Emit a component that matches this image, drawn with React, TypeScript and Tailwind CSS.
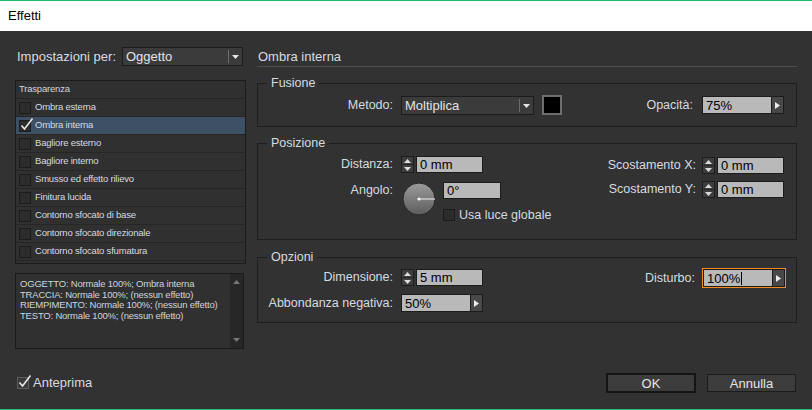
import React from "react";

const font = "font-['Liberation_Sans',Arial,sans-serif]";
const label = "whitespace-nowrap text-[12.5px] leading-[15px] text-[#d6dbe0]";

const effects = [
  "Ombra esterna",
  "Ombra interna",
  "Bagliore esterno",
  "Bagliore interno",
  "Smusso ed effetto rilievo",
  "Finitura lucida",
  "Contorno sfocato di base",
  "Contorno sfocato direzionale",
  "Contorno sfocato sfumatura",
];

const summary = [
  "OGGETTO: Normale 100%; Ombra interna",
  "TRACCIA: Normale 100%; (nessun effetto)",
  "RIEMPIMENTO: Normale 100%; (nessun effetto)",
  "TESTO: Normale 100%; (nessun effetto)",
];

function CheckBox({ checked = false, light = false }: { checked?: boolean; light?: boolean }) {
  const box = light ? "border-[#5e5e5e] bg-[#3a3a3a]" : "border-[#1b1b1b] bg-[#2c2c2c]";
  return (
    <span className={`relative block h-[12px] w-[12px] shrink-0 border ${box}`}>
      {checked && (
        <svg className="absolute -left-[1px] -top-[4px] h-[16px] w-[16px]" viewBox="0 0 16 16" fill="none">
          <path d="M2.5 8.5 L5.5 12 L13.5 1.5" stroke="#ececec" strokeWidth="1.5" />
        </svg>
      )}
    </span>
  );
}

function Dropdown({ value, width }: { value: string; width: string }) {
  return (
    <div className={`flex h-[19px] items-center border border-[#1c1c1c] bg-[#3b3b3b] ${width}`}>
      <span className="flex-1 pl-[3px] text-[13px] leading-none text-[#e0e4e8]">{value}</span>
      <span className="h-[13px] w-px bg-[#6c6c6c]" />
      <svg width="13" height="17" viewBox="0 0 13 17">
        <path d="M3 7 H10 L6.5 11 Z" fill="#e6e6e6" />
      </svg>
    </div>
  );
}

function Field({ value, width, caret = false }: { value: string; width: string; caret?: boolean }) {
  return (
    <div className={`flex h-[17px] items-center border border-[#1c1c1c] bg-[#b9b9b9] pl-[3px] ${width}`}>
      <span className="text-[13px] leading-none text-black">{value}</span>
      {caret && <span className="ml-px h-[13px] w-px bg-black" />}
    </div>
  );
}

function ArrowField({ value, width, caret = false }: { value: string; width: string; caret?: boolean }) {
  return (
    <div className="flex h-[18px]">
      <div className={`flex items-center border border-[#1c1c1c] bg-[#b9b9b9] pl-[3px] ${width}`}>
        <span className="text-[13px] leading-none text-black">{value}</span>
        {caret && <span className="ml-px h-[13px] w-px bg-black" />}
      </div>
      <div className="flex w-[12px] items-center justify-center border border-l-0 border-[#1c1c1c] bg-[#484848]">
        <svg width="5" height="7" viewBox="0 0 5 7">
          <path d="M0 0 L5 3.5 L0 7 Z" fill="#ececec" />
        </svg>
      </div>
    </div>
  );
}

function Spinner() {
  return (
    <div className="flex h-[17px] w-[13px] flex-col border border-[#1c1c1c] bg-[#3e3e3e]">
      <div className="flex flex-1 items-center justify-center border-b border-[#252525]">
        <svg width="7" height="4" viewBox="0 0 7 4">
          <path d="M0 4 H7 L3.5 0 Z" fill="#dcdcdc" />
        </svg>
      </div>
      <div className="flex flex-1 items-center justify-center">
        <svg width="7" height="4" viewBox="0 0 7 4">
          <path d="M0 0 H7 L3.5 4 Z" fill="#dcdcdc" />
        </svg>
      </div>
    </div>
  );
}

function SpinField({ value }: { value: string }) {
  return (
    <div className="flex gap-[2px]">
      <Spinner />
      <Field value={value} width="w-[67px]" />
    </div>
  );
}

function Dial() {
  return (
    <svg width="34" height="34" viewBox="0 0 34 34" className="ml-[9px] shrink-0">
      <defs>
        <linearGradient id="dialFill" x1="0" y1="0" x2="0" y2="1">
          <stop offset="0%" stopColor="#9c9c9c" />
          <stop offset="100%" stopColor="#5c5c5c" />
        </linearGradient>
      </defs>
      <circle cx="17" cy="17" r="16" fill="url(#dialFill)" stroke="#262626" strokeWidth="1" />
      <line x1="17" y1="17" x2="33" y2="17" stroke="#f4f4f4" strokeWidth="1" />
      <circle cx="17" cy="17" r="1.6" fill="#f4f4f4" />
    </svg>
  );
}

function Group({ title, className, children }: { title: string; className: string; children: React.ReactNode }) {
  return (
    <fieldset className={`border border-[#1e1e1e] ${className}`}>
      <legend className={`ml-[9px] h-[16px] px-[4px] !leading-[16px] ${label}`}>{title}</legend>
      {children}
    </fieldset>
  );
}

export default function App() {
  return (
    <div className={`flex h-[410px] w-[812px] flex-col overflow-hidden bg-[#323232] ${font}`}>
      <div className="h-px bg-[#1cc06e]" />
      <div className="flex h-[30px] items-center bg-white pl-[8px] text-[13px] text-black">Effetti</div>

      <div className="flex h-[378px] flex-col">
        <div className="flex gap-[11px] pl-[15px] pt-[16px]">
          {/* left column */}
          <div className="flex w-[231px] flex-col">
            <div className="flex h-[19px] items-center pl-[2px] pr-[3px]">
              <span className="text-[13px] text-[#d6dbe0]">Impostazioni per:</span>
              <div className="ml-auto">
                <Dropdown value="Oggetto" width="w-[121px]" />
              </div>
            </div>

            <div className="mt-[14px] h-[184px] border border-[#1b1b1b] bg-[#303030]">
              <div className="flex h-[18px] items-center border-b border-[#262626] pl-[3px] text-[9.5px] tracking-[-0.2px] text-[#d0d6dc]">
                Trasparenza
              </div>
              {effects.map((name, i) => (
                <div
                  key={name}
                  className={`flex h-[18px] items-center gap-[4px] border-b border-[#262626] pl-[3px] ${
                    i === 1 ? "bg-[#3e5065]" : ""
                  }`}
                >
                  <CheckBox checked={i === 1} />
                  <span className="text-[9.5px] tracking-[-0.2px] text-[#d4dae0]">{name}</span>
                </div>
              ))}
            </div>

            <div className="mt-[9px] flex h-[76px] w-[229px] border border-[#1b1b1b] bg-[#303030]">
              <div className="flex-1 pl-[4px] pt-[5px] text-[9.5px] leading-[10.6px] tracking-[-0.2px] text-[#ccd4dc]">
                {summary.map((line) => (
                  <div key={line}>{line}</div>
                ))}
              </div>
              <div className="flex w-[13px] flex-col items-center justify-between bg-[#272727] py-[6px]">
                <svg width="7" height="4" viewBox="0 0 7 4">
                  <path d="M0 4 H7 L3.5 0 Z" fill="#777" />
                </svg>
                <svg width="7" height="4" viewBox="0 0 7 4">
                  <path d="M0 0 H7 L3.5 4 Z" fill="#777" />
                </svg>
              </div>
            </div>
          </div>

          {/* right column */}
          <div className="flex w-[540px] flex-col">
            <div className="h-[20px] border-b border-[#4d4d4d] pl-px text-[13px] leading-[19px] text-[#d6dbe0]">
              Ombra interna
            </div>

            <Group title="Fusione" className="mt-[8px]">
              <div className="flex items-center pb-[11px] pr-[12px] pt-[4px]">
                <span className={`w-[135px] text-right ${label}`}>Metodo:</span>
                <div className="ml-[8px]">
                  <Dropdown value="Moltiplica" width="w-[133px]" />
                </div>
                <span className="ml-[8px] h-[20px] w-[20px] border-2 border-[#6e6e6e] bg-black" />
                <span className={`ml-auto ${label}`}>Opacità:</span>
                <div className="ml-[9px]">
                  <ArrowField value="75%" width="w-[70px]" />
                </div>
              </div>
            </Group>

            <Group title="Posizione" className="mt-[8px]">
              <div className="flex items-start justify-between pb-[18px] pr-[12px] pt-[5px]">
                <div className="flex flex-col">
                  <div className="flex h-[17px] items-center">
                    <span className={`w-[135px] text-right ${label}`}>Distanza:</span>
                    <div className="ml-[8px]">
                      <SpinField value="0 mm" />
                    </div>
                  </div>
                  <div className="mt-[9px] flex items-start">
                    <span className={`w-[135px] text-right !leading-[17px] ${label}`}>Angolo:</span>
                    <Dial />
                    <div className="ml-[7px] flex flex-col">
                      <Field value="0°" width="w-[58px]" />
                      <div className="mt-[10px] flex h-[12px] items-center gap-[4px]">
                        <CheckBox />
                        <span className={label}>Usa luce globale</span>
                      </div>
                    </div>
                  </div>
                </div>

                <div className="mt-px flex flex-col items-end">
                  <div className="flex h-[17px] items-center gap-[6px]">
                    <span className={label}>Scostamento X:</span>
                    <SpinField value="0 mm" />
                  </div>
                  <div className="mt-[7px] flex h-[17px] items-center gap-[6px]">
                    <span className={label}>Scostamento Y:</span>
                    <SpinField value="0 mm" />
                  </div>
                </div>
              </div>
            </Group>

            <Group title="Opzioni" className="mt-[9px]">
              <div className="flex items-start justify-between pb-[10px] pr-[10px] pt-[3px]">
                <div className="mt-px flex flex-col">
                  <div className="flex h-[17px] items-center">
                    <span className={`w-[135px] text-right ${label}`}>Dimensione:</span>
                    <div className="ml-[8px]">
                      <SpinField value="5 mm" />
                    </div>
                  </div>
                  <div className="mt-[8px] flex h-[18px] items-center">
                    <span className={`w-[135px] text-right ${label}`}>Abbondanza negativa:</span>
                    <div className="ml-[8px]">
                      <ArrowField value="50%" width="w-[70px]" />
                    </div>
                  </div>
                </div>

                <div className="flex h-[20px] items-center gap-[7px]">
                  <span className={label}>Disturbo:</span>
                  <div className="border border-[#f28a1a]">
                    <ArrowField value="100%" width="w-[70px]" caret />
                  </div>
                </div>
              </div>
            </Group>
          </div>
        </div>

        {/* footer */}
        <div className="mt-auto flex items-center justify-between pb-[16px] pl-[17px] pr-[16px]">
          <div className="flex items-center gap-[4px]">
            <CheckBox checked light />
            <span className="text-[13px] text-[#d6dbe0]">Anteprima</span>
          </div>
          <div className="flex items-center gap-[11px]">
            <button className="h-[20px] w-[90px] border-2 border-[#151515] bg-[#3c3c3c] text-[13px] leading-none text-[#e2e6ea]">
              OK
            </button>
            <button className="h-[18px] w-[89px] border border-[#1c1c1c] bg-[#3c3c3c] text-[13px] leading-none text-[#e2e6ea]">
              Annulla
            </button>
          </div>
        </div>
      </div>
      <div className="h-px bg-[#1cc06e]" />
    </div>
  );
}
